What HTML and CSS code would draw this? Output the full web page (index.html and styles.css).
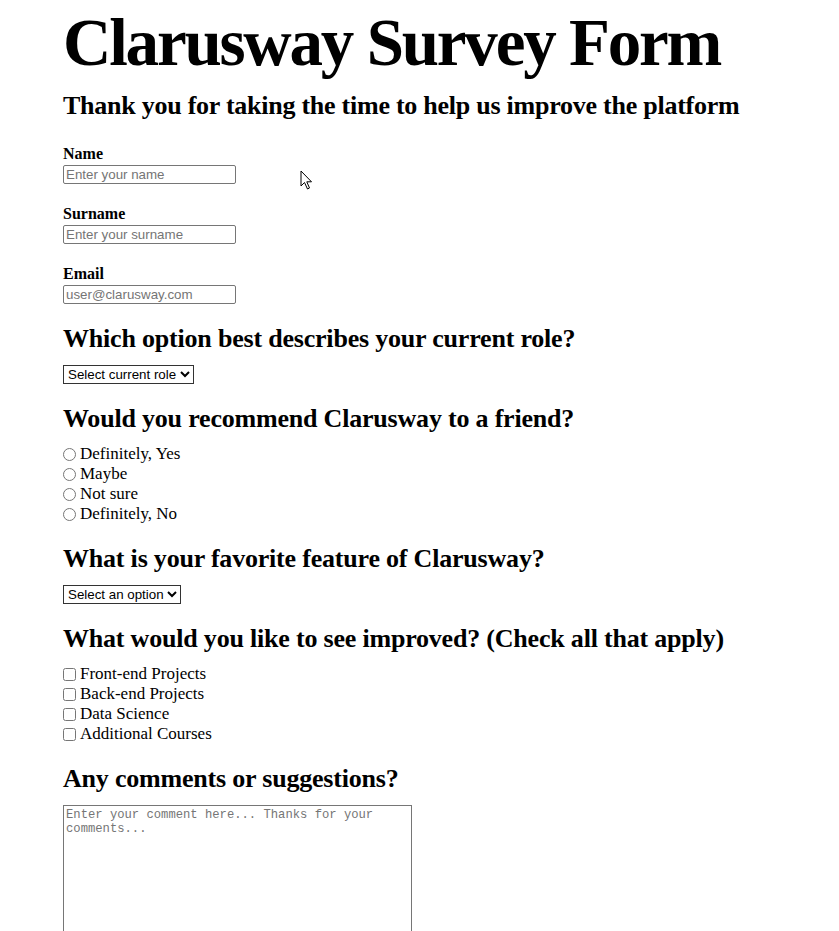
FILE: index.html
```html
<!DOCTYPE html>
<html>
<head>
	<title>Clarusway Survey Form</title>
	<link rel="stylesheet" href="styles.css">
</head>
<body>
<div class="survey">
	<h1 id="title">Clarusway Survey Form</h1>
	<h2 id="description">Thank you for taking the time to help us improve the platform</h2>

	<form id="survey-form">
		<div class="field">
			<label for="name">Name</label>
			<input type="text" id="name" placeholder="Enter your name">
		</div>
		<div class="field">
			<label for="surname">Surname</label>
			<input type="text" id="surname" placeholder="Enter your surname">
		</div>
		<div class="field">
			<label for="email">Email</label>
			<input type="email" id="email" placeholder="user@clarusway.com">
		</div>

		<h2 class="question">Which option best describes your current role?</h2>
		<select id="role">
			<option>Select current role</option>
			<option>Student</option>
			<option>Full Time Job</option>
			<option>Other</option>
		</select>

		<h2 class="question">Would you recommend Clarusway to a friend?</h2>
		<div class="choices">
			<label class="choice"><input type="radio" name="recommend">Definitely, Yes</label>
			<label class="choice"><input type="radio" name="recommend">Maybe</label>
			<label class="choice"><input type="radio" name="recommend">Not sure</label>
			<label class="choice"><input type="radio" name="recommend">Definitely, No</label>
		</div>

		<h2 class="question">What is your favorite feature of Clarusway?</h2>
		<select id="feature">
			<option>Select an option</option>
			<option>Challenges</option>
			<option>Projects</option>
			<option>Community</option>
		</select>

		<h2 class="question">What would you like to see improved? (Check all that apply)</h2>
		<div class="choices">
			<label class="choice"><input type="checkbox">Front-end Projects</label>
			<label class="choice"><input type="checkbox">Back-end Projects</label>
			<label class="choice"><input type="checkbox">Data Science</label>
			<label class="choice"><input type="checkbox">Additional Courses</label>
		</div>

		<h2 class="question">Any comments or suggestions?</h2>
		<textarea id="comments" placeholder="Enter your comment here... Thanks for your comments..."></textarea>
	</form>
</div>

<!-- mouse pointer caught in the capture -->
<svg class="pointer" width="14" height="21" viewBox="0 0 14 21">
	<path d="M1 1 L1 16 L4.5 12.5 L7.5 19 L9.5 18 L6.8 11.8 L11.5 11.8 Z" fill="white" stroke="black" stroke-width="1" stroke-linejoin="miter"/>
</svg>
</body>
</html>
```

FILE: styles.css
```css
body{
	margin: 0;
	background: white;
	color: black;
	font-family: "Liberation Serif", serif;
}
.survey{
	padding: 2px 0 0 63px;
}
#title{
	margin: 0;
	font-size: 67px;
	line-height: 80px;
	font-weight: bold;
	letter-spacing: -2.2px;
}
#description{
	margin: 9px 0 0;
	font-size: 26px;
	line-height: 30px;
	letter-spacing: -0.25px;
}
#survey-form{
	margin-top: 23px;
}
.field{
	margin-bottom: 20px;
}
.field label{
	display: block;
	font-size: 16px;
	font-weight: bold;
	line-height: 20px;
	margin-bottom: 1px;
}
input[type="text"],
input[type="email"]{
	box-sizing: border-box;
	width: 173px;
	height: 19px;
	padding: 1px 2px;
	border: 1px solid #767676;
	border-radius: 2px;
	font-family: "Liberation Sans", Arial, sans-serif;
	font-size: 13.33px;
	margin: 0;
}
.question{
	margin: 20px 0 11px;
	font-size: 26px;
	line-height: 30px;
	letter-spacing: -0.2px;
}
.field + .question{
	margin-top: 0;
}
select{
	display: block;
	height: 19px;
	margin: 0;
	font-family: "Liberation Sans", Arial, sans-serif;
	font-size: 13.33px;
	border: 1px solid #333;
	border-radius: 0;
	background: white;
	color: black;
}
.choices{
	margin-top: -1px;
}
.choice{
	display: flex;
	align-items: center;
	height: 20px;
	font-size: 17px;
}
.choice input{
	width: 13px;
	height: 13px;
	margin: 0 4px 0 0;
}
#comments{
	display: block;
	box-sizing: border-box;
	width: 349px;
	height: 160px;
	margin: 0;
	padding: 2px;
	border: 1px solid #767676;
	font-family: "Liberation Mono", monospace;
	font-size: 12.2px;
	resize: none;
}
.pointer{
	position: absolute;
	left: 300px;
	top: 170px;
}
```
